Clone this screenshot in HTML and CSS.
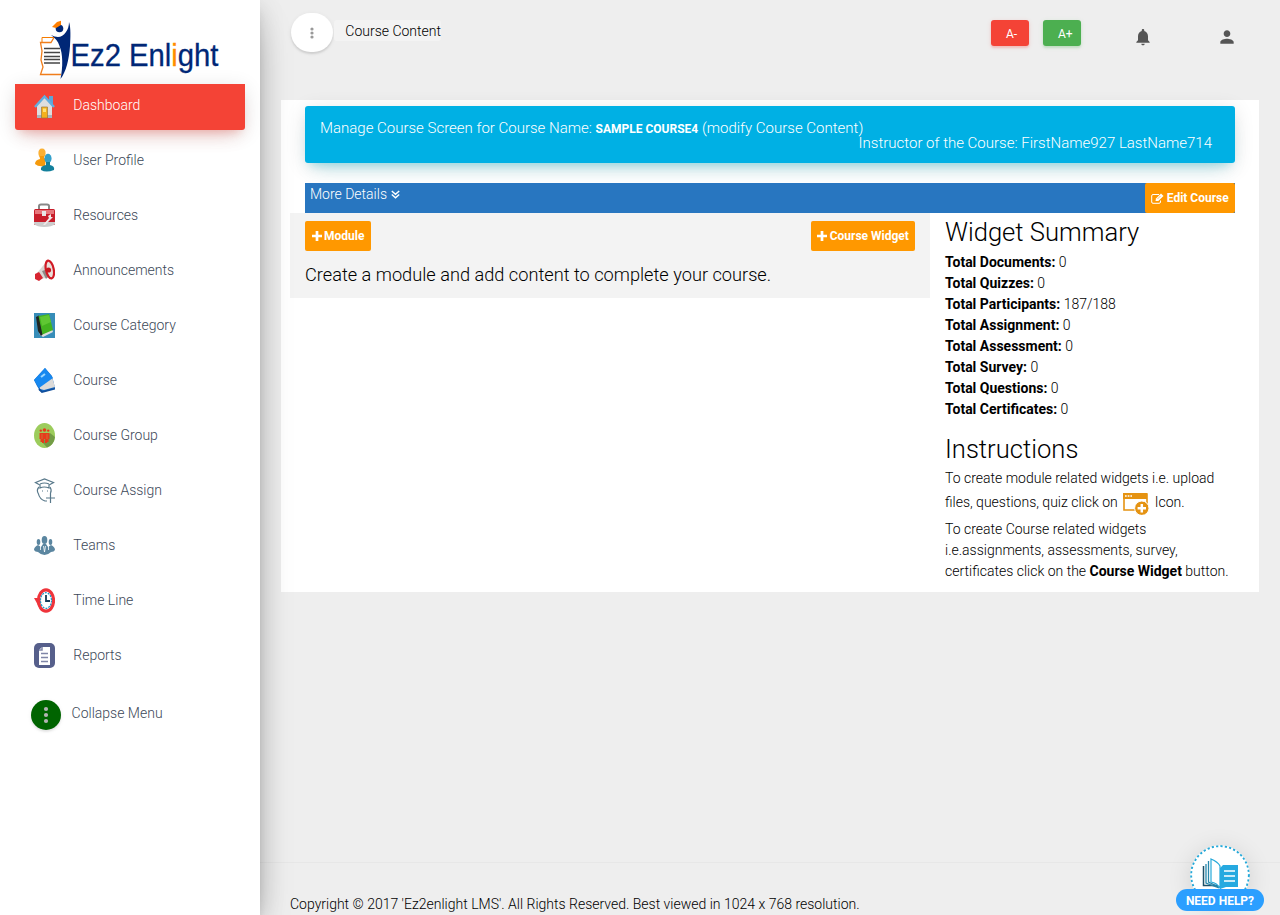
FILE: index.html
```html
<!DOCTYPE html>
<html lang="en">
<head>
<meta charset="utf-8">
<title>Course Content</title>
<link rel="stylesheet" href="styles.css">
</head>
<body>
<div class="app">
  <aside class="sidebar">
    <div class="logo">
      <svg width="260" height="84" viewBox="0 0 260 84">
        <path d="M42 42V37.500H56" fill="none" stroke="#f57c00"/>
        <path d="M54 37.500L51 42.500H40.500L42 51L41 60L43 67L40.500 74.500H61" fill="none" stroke="#f07d1a" stroke-width="1.300"/>
        <path d="M44 48.500H60M44 52.500H60M44 56.500H60M44 59.500H60M44 63H60" stroke="#454545" stroke-width="1.500"/>
        <path d="M51 35C57 38 62 38 66 32C68 29 69 26 69 22C71 27 70.500 39 70 46C69 60 66 72 60.500 79C63 67 63 54 59.500 46C58 41 55 38 51 35Z" fill="#002776"/>
        <circle cx="59.500" cy="28.500" r="3.800" fill="#002776"/>
        <path d="M52 27L57 22L61 20.800L61 25L56 28Z" fill="#ff7f00"/>
        <text class="logo-text" x="70.500" y="65.500" textLength="148" lengthAdjust="spacingAndGlyphs">Ez2 Enl<tspan class="logo-i">i</tspan>ght</text>
      </svg>
    </div>
    <ul class="nav">
      <li class="active"><svg class="ico" viewBox="0 0 21 25"><path d="M15 2h4v8h-4z" fill="#5ba5d8"/><path d="M3 11L10.500 3L18 11V24H3Z" fill="#dedede"/><path d="M3 21H18V24H3Z" fill="#aab4bd"/><path d="M1 13L10.500 2.500L20 13" fill="none" stroke="#62aede" stroke-width="2.500"/><path d="M7.500 13h6v11h-6z" fill="#f4b21e" stroke="#9b7a3c" stroke-width=".7"/><path d="M9 14.500h3V18H9z" fill="#ffe277"/></svg><span>Dashboard</span></li>
      <li><svg class="ico" viewBox="0 0 21 25"><ellipse cx="8" cy="5" rx="3.600" ry="4.500" fill="#fbb034"/><path d="M5.500 8L6 11Q1 12 1 16Q4 19 11 18L12 11L10 10V8Z" fill="#f59a0c"/><ellipse cx="14" cy="10.500" rx="3.600" ry="4.700" fill="#33a0cb"/><path d="M12 14V17Q6 18 7 22Q12 25 20 22Q21 18 16 17V14Z" fill="#13809c"/></svg><span>User Profile</span></li>
      <li><svg class="ico" viewBox="0 0 21 25"><path d="M5 7V3Q5 1.500 7 1.500H13Q15 1.500 15 3V7" fill="none" stroke="#888" stroke-width="2"/><rect y="6" width="21" height="16" rx="1.500" fill="#c81e2b"/><path d="M1 7H20V11H1Z" fill="#e7777c"/><path d="M0 19H21V21Q18 24 10 24Q3 24 0 21Z" fill="#ccc"/><path d="M8 8h4v5H8z" fill="#e7e7e7"/><path d="M9 22L15 15L14 13L17 11V14H19L16 17L11 22Z" fill="#f0e8e8"/></svg><span>Resources</span></li>
      <li><svg class="ico" viewBox="0 0 21 25"><path d="M3 15L13 3L18 19L6 21Z" fill="#d9d6d3"/><path d="M1 16L5 14L9 20L5 23L1 21Z" fill="#d72531"/><path d="M8 13L12 21L14 19L11 12Z" fill="#8f8986"/><ellipse cx="15.800" cy="11.500" rx="3.900" ry="9" transform="rotate(-12 15.800 11.500)" fill="#e9dfda" stroke="#d11a25" stroke-width="2.200"/><circle cx="14.500" cy="12" r="2.600" fill="#c71920"/></svg><span>Announcements</span></li>
      <li><svg class="ico" viewBox="0 0 21 25"><path d="M0 0h21v25H0z" fill="#378db8"/><path d="M5 20L18 16L19 19L9 24L6 22Z" fill="#ddd"/><path d="M2 4L5 2.500L9 21L7 23L4 18Z" fill="#202522"/><path d="M4.500 3L15 1L19 17L8.500 21.500Z" fill="#43b31f"/><path d="M6 4L15 2L17 9L8 13Z" fill="#5fc733"/></svg><span>Course Category</span></li>
      <li><svg class="ico" viewBox="0 0 21 25"><path d="M0 12L11 0L18 8L21 20L10 24L6 23L3 18Z" fill="#176cc5"/><path d="M5 18L18 9L21 19L10 22L6 21Z" fill="#dcdad8"/><path d="M0 12L11 0L19 10L5 20Z" fill="#1688f0"/><path d="M7 9L11 6" stroke="#9bd8ff" stroke-width="2"/><path d="M5 21L8 24L21 20.500" fill="none" stroke="#114f9c" stroke-width="1.800"/></svg><span>Course</span></li>
      <li><svg class="ico" viewBox="0 0 21 25"><ellipse cx="10.500" cy="12.500" rx="10.500" ry="12.500" fill="#9ccc5c"/><path d="M8 19L13 24.500Q20 22 21 14L16 10Z" fill="#739c46"/><circle cx="10.500" cy="7" r="1.800" fill="#e63b1c"/><circle cx="6.800" cy="7.600" r="1.200" fill="#e63b1c"/><circle cx="14.200" cy="7.600" r="1.200" fill="#e63b1c"/><path d="M5.500 10H15.500V16H14.500V19H13V20H11V16H10V20H8V19H6.500V16H5.500Z" fill="#e63b1c"/><path d="M8 11V16M13 11V16" stroke="#b5a648" stroke-width=".5"/></svg><span>Course Group</span></li>
      <li><svg class="ico" viewBox="0 0 21 25"><path d="M1.500 4.500L10.500 1L19.500 4.500L15 7V10Q10 8 6 10V7Z M6 6Q10.500 4 15 6" fill="none" stroke="#58788a" stroke-width="1.200"/><path d="M5 9Q2 12 4.500 16Q5.500 21 11 23H13M16 9Q18 12 16.500 15M9 13H8M14 13H13M16.500 15V25M12 20H21" fill="none" stroke="#58788a" stroke-width="1.200"/></svg><span>Course Assign</span></li>
      <li><svg class="ico" viewBox="0 0 21 25"><g fill="#5b86a0"><ellipse cx="10.500" cy="7" rx="2.800" ry="4"/><ellipse cx="4.500" cy="9" rx="1.800" ry="3"/><ellipse cx="16.500" cy="9" rx="1.800" ry="3"/><path d="M0 17Q0 14 4 12L7 14L9 11H12L14 14L17 12Q21 14 21 17Q20 19 17 19Q14 22 10.500 22Q7 22 4 19Q1 19 0 17Z"/></g><path d="M6.500 13V17M9.500 13L10.500 19L11.500 13M14.500 13V17" stroke="#fff" stroke-width=".8" fill="none"/></svg><span>Teams</span></li>
      <li><svg class="ico" viewBox="0 0 21 25"><ellipse cx="12" cy="12.500" rx="7.500" ry="10.700" fill="#fff" stroke="#ef343b" stroke-width="3.200"/><path d="M0 10L9 10L5 19Z" fill="#ef343b"/><ellipse cx="12" cy="12.500" rx="5.500" ry="7.800" fill="#fff" stroke="#1899c7" stroke-width="1.200" stroke-dasharray="2 1"/><path d="M12 7V13H16" fill="none" stroke="#173c58" stroke-width="1.800"/></svg><span>Time Line</span></li>
      <li><svg class="ico" viewBox="0 0 21 25"><rect width="21" height="25" rx="5" fill="#565f8b"/><path d="M8 4H16V22H5V7Z" fill="#fff"/><path d="M5 7H8V4M7 10.500H14M7 14.500H14M7 18.500H14" fill="none" stroke="#8086a8" stroke-width="1.500"/></svg><span>Reports</span></li>
    </ul>
    <div class="collapse"><div class="collapse-button"><svg width="6" height="18" viewBox="0 0 6 18" fill="#b4b4b4"><circle cx="3" cy="3" r="2.100"/><circle cx="3" cy="9" r="2.100"/><circle cx="3" cy="15" r="2.100"/></svg></div><span>Collapse Menu</span></div>
  </aside>

  <div class="main">
    <header class="topbar">
      <div class="menu-button"><svg width="4" height="12" viewBox="0 0 4 12" fill="#999"><circle cx="2" cy="2" r="1.600"/><circle cx="2" cy="6" r="1.600"/><circle cx="2" cy="10" r="1.600"/></svg></div>
      <div class="page-title">Course Content</div>
      <div class="tools">
        <div class="font-button red">A-</div>
        <div class="font-button green">A+</div>
        <svg class="bell" width="20" height="20" viewBox="0 0 24 24" fill="#555"><path d="M12 22c1.100 0 2-.9 2-2h-4c0 1.100.890 2 2 2zm6-6v-5c0-3.070-1.640-5.640-4.500-6.320V4c0-.830-.670-1.500-1.500-1.500s-1.500.670-1.500 1.500v.680C7.630 5.360 6 7.920 6 11v5l-2 2v1h16v-1l-2-2z"/></svg>
        <svg class="person" width="20" height="20" viewBox="0 0 24 24" fill="#555"><path d="M12 12c2.210 0 4-1.790 4-4s-1.790-4-4-4-4 1.790-4 4 1.790 4 4 4zm0 2c-2.670 0-8 1.340-8 4v2h16v-2c0-2.660-5.330-4-8-4z"/></svg>
      </div>
    </header>

    <section class="card">
      <div class="banner">
        <div>Manage Course Screen for Course Name: <b>SAMPLE COURSE4</b> (modify Course Content)</div>
        <div class="instructor">Instructor of the Course: FirstName927 LastName714</div>
      </div>
      <div class="details">
        <span class="more">More Details <svg width="9" height="9" viewBox="0 0 9 9" fill="none" stroke="#fff" stroke-width="1.500"><path d="M.8 1L4.500 4.200L8.200 1M.8 4.500L4.500 7.700L8.200 4.500"/></svg></span>
        <div class="btn edit"><svg width="13" height="11" viewBox="0 0 13 11" fill="none" stroke="#fff"><path d="M8 1.500H2Q.7 1.500 .7 3V9Q.7 10.300 2 10.300H8Q9.500 10.300 9.500 9V7.500"/><path d="M4.500 8L5 5.500L10 .5L12.500 3L7.300 8Z" fill="#fff" stroke="none"/><path d="M6.500 6L9.500 3" stroke="#ff9800" stroke-width=".6"/></svg>Edit Course</div>
      </div>
      <div class="columns">
        <div class="modules">
          <div class="actions">
            <div class="btn module"><svg width="10" height="10" viewBox="0 0 10 10"><path d="M5 0V10M0 5H10" stroke="#fff" stroke-width="2.700"/></svg>Module</div>
            <div class="btn widget"><svg width="10" height="10" viewBox="0 0 10 10"><path d="M5 0V10M0 5H10" stroke="#fff" stroke-width="2.700"/></svg>Course Widget</div>
          </div>
          <div class="hint">Create a module and add content to complete your course.</div>
        </div>
        <div class="info">
          <h3>Widget Summary</h3>
          <div class="stats">
            <div><b>Total Documents:</b> 0</div>
            <div><b>Total Quizzes:</b> 0</div>
            <div><b>Total Participants:</b> 187/188</div>
            <div><b>Total Assignment:</b> 0</div>
            <div><b>Total Assessment:</b> 0</div>
            <div><b>Total Survey:</b> 0</div>
            <div><b>Total Questions:</b> 0</div>
            <div><b>Total Certificates:</b> 0</div>
          </div>
          <h3 class="second">Instructions</h3>
          <div>To create module related widgets i.e. upload</div>
          <div class="icon-line"><span>files, questions, quiz click on</span><svg width="26" height="22" viewBox="0 0 26 22"><path d="M1 1H24V17H1Z" fill="#fff" stroke="#e59312" stroke-width="1.600"/><path d="M0 0H24V6H0Z" fill="#e59312"/><path d="M2 3H9" stroke="#fff" stroke-width="1.600" stroke-dasharray="1.700 1"/><circle cx="18.800" cy="15.200" r="7.200" fill="#e59312" stroke="#fff"/><path d="M18.800 11V19.400M14.600 15.200H23" stroke="#fff" stroke-width="2.500"/></svg><span>Icon.</span></div>
          <div>To create Course related widgets<br>i.e.assignments, assessments, survey,<br>certificates click on the <b>Course Widget</b> button.</div>
        </div>
      </div>
    </section>

    <footer class="footer">Copyright © 2017 'Ez2enlight LMS'. All Rights Reserved. Best viewed in 1024 x 768 resolution.</footer>
  </div>
</div>
<div class="help">
  <svg width="60" height="60" viewBox="0 0 60 60"><circle cx="30" cy="30" r="29.500" fill="#fff"/><circle cx="30" cy="30" r="28.900" fill="none" stroke="#26a9d9" stroke-width="2" stroke-dasharray="2.200 2.200"/><path d="M13.500 21V40.500H28" fill="none" stroke="#1e5068" stroke-width="1.500"/><path d="M16 19V38L29 43M18.500 16V37L29 42" fill="none" stroke="#2787ab" stroke-width="1.300"/><path d="M21 14Q28 17 30 21V43Q27 38 21 37Z" fill="#fff" stroke="#26a9d9" stroke-width="1.200"/><path d="M30 23L33 20H48V42H36L30 44Z" fill="#26a9e0"/><path d="M34 26H45M34 31H45M34 36H45" stroke="#fff" stroke-width="1.500"/></svg>
  <div class="help-label">NEED HELP?</div>
</div>
</body>
</html>
```

FILE: styles.css
```css
* { box-sizing: border-box; }
body {
  margin: 0;
  background: #eee;
  color: #000;
  font: 300 14px/21px Roboto, sans-serif;
  overflow: hidden;
  white-space: nowrap;
}
b { font-weight: 700; }
svg { display: block; flex: none; }
.app { display: flex; height: 915px; }

.sidebar {
  width: 260px;
  flex: none;
  background: #fff;
  color: #3c4858;
  position: relative;
  z-index: 1;
  box-shadow: 0 16px 38px -12px rgba(0,0,0,.4), 0 4px 25px 0 rgba(0,0,0,.12), 0 8px 10px -5px rgba(0,0,0,.2);
}
.logo { height: 84px; }
.logo-text { font: 400 31.500px "Liberation Sans", Arial, sans-serif; fill: #002776; stroke: #002776; stroke-width: .3px; }
.logo-i { fill: #ff8c00; stroke: #ff8c00; }
.nav { list-style: none; margin: 0; padding: 0 15px; }
.nav li {
  display: flex;
  align-items: center;
  height: 45px;
  margin-bottom: 10px;
  padding: 0 19px 0 19px;
  border-radius: 3px;
}
.nav li span { margin: -3px 0 0 18.300px; }
.ico { width: 21px; height: 25px; margin-bottom: 2px; }
.nav .active {
  height: 46px;
  margin-bottom: 9px;
  color: #fff;
  background: #f44336;
  border-radius: 0 0 3px 3px;
  box-shadow: 0 12px 20px -10px rgba(244,67,54,.28), 0 4px 20px 0 rgba(0,0,0,.12), 0 7px 8px -5px rgba(244,67,54,.2);
}
.collapse { display: flex; padding: 11px 31px 0; gap: 10.600px; }
.collapse-button {
  width: 30px;
  height: 30px;
  border-radius: 50%;
  background: #006400;
  display: flex;
  align-items: center;
  justify-content: center;
  box-shadow: 0 2px 2px rgba(0,0,0,.08), 0 1px 5px rgba(0,0,0,.06);
}
.collapse > span { padding-top: 3px; }

.main { flex: 1; display: flex; flex-direction: column; }
.topbar { height: 100px; display: flex; padding: 13px 43px 0 31px; }
.menu-button {
  width: 42px;
  height: 39px;
  background: #fff;
  border-radius: 20px;
  display: flex;
  align-items: center;
  justify-content: center;
  box-shadow: 0 2px 2px rgba(0,0,0,.1), 0 1px 5px rgba(0,0,0,.06);
}
.page-title {
  height: 21px;
  margin: 7px 0 0 1px;
  padding-left: 11.300px;
  line-height: 22px;
  background: #f3f3f3;
  border-radius: 3px;
}
.tools { margin-left: auto; display: flex; padding-top: 7px; }
.font-button {
  width: 38px;
  height: 26px;
  margin-right: 14px;
  padding-left: 15px;
  border-radius: 3px;
  color: #fff;
  font-size: 12px;
  font-weight: 400;
  line-height: 28px;
}
.red { background: #f44336; box-shadow: 0 2px 2px rgba(244,67,54,.2), 0 1px 5px rgba(244,67,54,.14); }
.green { background: #4caf50; box-shadow: 0 2px 2px rgba(76,175,80,.2), 0 1px 5px rgba(76,175,80,.14); }
.bell { margin: 7px 0 0 38px; }
.person { margin: 7px 0 0 64px; }

.card { width: 978px; height: 492px; margin-left: 21px; background: #fff; padding: 6px 24px 0; }
.banner {
  height: 57px;
  padding: 15px 23px 0 15px;
  color: #fff;
  font-size: 15px;
  line-height: 15px;
  background: #00b0e4;
  border-radius: 3px;
  box-shadow: 0 12px 20px -10px rgba(0,188,212,.28), 0 4px 20px 0 rgba(0,0,0,.12), 0 7px 8px -5px rgba(0,188,212,.2);
}
.banner > div { height: 15px; }
.banner b { font-size: 12px; line-height: 12px; }
.instructor { text-align: right; line-height: 14px; }
.details {
  display: flex;
  justify-content: space-between;
  height: 30px;
  margin-top: 20px;
  background: #2876c0;
  color: #fff;
}
.more { display: flex; gap: 3.500px; padding: 1px 0 0 5px; }
.more svg { margin-top: 6px; }
.btn {
  display: flex;
  align-items: center;
  justify-content: center;
  gap: 2.500px;
  height: 30px;
  color: #fff;
  background: #ff9800;
  border-radius: 2px;
  font-size: 12px;
  font-weight: 700;
}
.edit { width: 90px; }
.module { width: 66px; }
.widget { width: 104px; }
.columns { display: flex; align-items: flex-start; margin-left: -15px; }
.modules { width: 640px; height: 85px; padding: 8px 15px 0; background: #f3f3f3; }
.actions { display: flex; justify-content: space-between; }
.hint { margin-top: 10px; font-size: 18.200px; line-height: 27px; }
.info { padding: 0 0 0 15px; }
.info h3 { margin: 0; font-size: 25.600px; font-weight: 300; line-height: 39px; }
.stats { margin-bottom: 10px; }
.info .second { height: 38px; }
.icon-line { display: flex; height: 30px; line-height: 27px; }
.icon-line svg { margin: 4px 6px 0 5px; }

.footer { margin-top: auto; height: 53px; border-top: 1px solid #e7e7e7; padding: 31px 30px 0; }

.help {
  position: absolute;
  right: 16px;
  bottom: 4px;
  width: 88px;
  height: 66px;
  z-index: 2;
}
.help > svg { margin-left: 14px; border-radius: 50%; box-shadow: 0 4px 25px rgba(0,0,0,.12); }
.help-label {
  position: absolute;
  left: 0;
  bottom: 0;
  width: 88px;
  height: 22px;
  border-radius: 11px;
  background: #2b9fff;
  color: #fff;
  font-size: 12px;
  font-weight: 700;
  line-height: 24px;
  text-align: center;
}
```
